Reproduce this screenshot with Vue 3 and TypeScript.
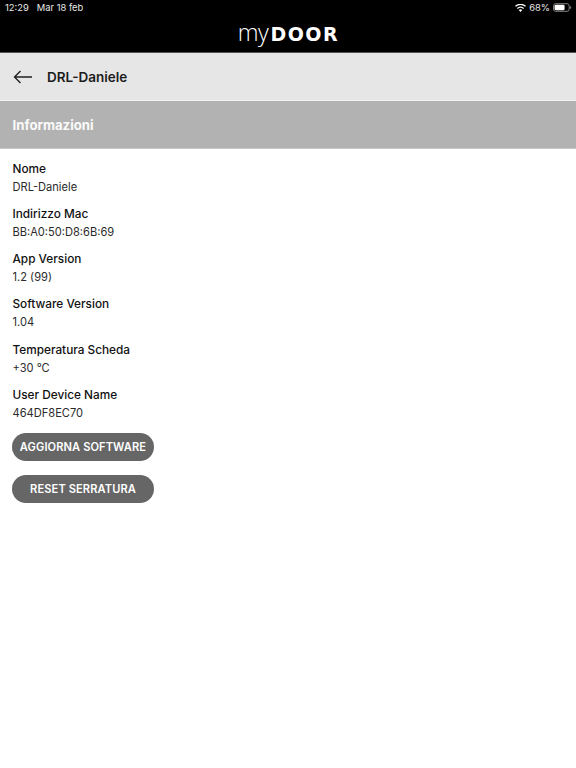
<script setup lang="ts">
const fields: { label: string; value: string }[] = [
  { label: 'Nome', value: 'DRL-Daniele' },
  { label: 'Indirizzo Mac', value: 'BB:A0:50:D8:6B:69' },
  { label: 'App Version', value: '1.2 (99)' },
  { label: 'Software Version', value: '1.04' },
  { label: 'Temperatura Scheda', value: '+30 °C' },
  { label: 'User Device Name', value: '464DF8EC70' },
]
const actions: string[] = ['AGGIORNA SOFTWARE', 'RESET SERRATURA']
</script>

<template>
  <div class="page">
    <header class="top">
      <div class="status">
        <div class="status-left"><span>12:29</span><span>Mar 18 feb</span></div>
        <div class="status-right">
          <svg width="11" height="8" viewBox="0 0 11 8" aria-hidden="true">
            <path d="M5.5 8 3.7 5.9a2.8 2.8 0 0 1 3.6 0Z" fill="#fff" />
            <path d="M2.8 4.9a4.2 4.2 0 0 1 5.4 0l.9-1a5.6 5.6 0 0 0-7.2 0Z" fill="#fff" />
            <path d="M.9 2.8a7 7 0 0 1 9.2 0l.9-1a8.4 8.4 0 0 0-11 0Z" fill="#fff" />
          </svg>
          <span>68%</span>
          <svg class="battery" width="19" height="9" viewBox="0 0 20 9" aria-hidden="true">
            <rect x=".5" y=".5" width="16.5" height="8" rx="2.2" fill="none" stroke="#8a8a8a" />
            <rect x="1.6" y="1.6" width="10.6" height="5.8" rx="1.2" fill="#fff" />
            <path d="M18 3v3c.7-.2 1.2-.8 1.2-1.500S18.700 3.200 18 3Z" fill="#8a8a8a" />
          </svg>
        </div>
      </div>
      <div class="brand">
        <span class="brand-my">my</span><span class="brand-door">DOOR</span>
      </div>
    </header>

    <div class="nav">
      <svg class="back" width="20" height="14" viewBox="0 0 20 14" aria-hidden="true">
        <path d="M19 7H1.500M7.500 1 1.500 7l6 6" fill="none" stroke="#222" stroke-width="1.400" />
      </svg>
      <span class="nav-title">DRL-Daniele</span>
    </div>

    <div class="section">Informazioni</div>

    <main class="content">
      <dl class="fields">
        <div v-for="f in fields" :key="f.label" class="field">
          <dt>{{ f.label }}</dt>
          <dd>{{ f.value }}</dd>
        </div>
      </dl>
      <div class="actions">
        <button v-for="a in actions" :key="a" type="button" class="btn">{{ a }}</button>
      </div>
    </main>
  </div>
</template>

<style>
html, body { background: #fff; }
</style>

<style scoped>
.page {
  width: 576px;
  height: 768px;
  overflow: hidden;
  background: #fff;
  font-family: Inter, "Liberation Sans", sans-serif;
  color: #1c1c1c;
}
.top {
  height: 52px;
  background: #000;
  border-bottom: 1px solid #555;
  box-sizing: content-box;
  color: #fff;
  display: flex;
  flex-direction: column;
}
.status {
  height: 15px;
  padding: 0 4px 0 5px;
  display: flex;
  justify-content: space-between;
  align-items: center;
  font-size: 9.400px;
  color: #e8e8e8;
}
.status-left { display: flex; gap: 8px; }
.status-right { display: flex; align-items: center; gap: 3px; }
.brand {
  flex: 1;
  display: flex;
  justify-content: center;
  align-items: baseline;
  padding-top: 2px;
  line-height: 30px;
  padding-left: 1px;
}
.brand-my {
  font-family: "Open Sans", sans-serif;
  font-weight: 300;
  font-size: 23.500px;
  letter-spacing: -0.500px;
  margin-right: 2px;
}
.brand-door {
  font-family: "DejaVu Sans", sans-serif;
  font-weight: 700;
  font-size: 19px;
  letter-spacing: 1.500px;
}
.nav {
  height: 47px;
  background: #e6e6e6;
  border-bottom: 1px solid #f0f0f0;
  display: flex;
  align-items: center;
  padding-left: 13px;
  gap: 14px;
}
.nav-title {
  font-size: 13.500px;
  font-weight: 600;
}
.section {
  height: 47px;
  background: #b2b2b2;
  border-bottom: 1px solid #c8c8c8;
  display: flex;
  align-items: center;
  padding-left: 12.500px;
  color: #fafafa;
  font-size: 13.200px;
  font-weight: 700;
}
.content { padding: 10.500px 12.500px 0; }
.fields { margin: 0; }
.field { height: 45.300px; }
dt {
  height: 18px;
  line-height: 18px;
  font-size: 11.800px;
  font-weight: 500;
  color: #111;
}
dd {
  margin: 0;
  line-height: 18px;
  font-size: 11.100px;
  color: #2a2a2a;
}
.actions {
  margin: 1.500px 0 0 -0.500px;
  display: flex;
  flex-direction: column;
  gap: 14px;
  align-items: flex-start;
}
.btn {
  width: 142px;
  height: 28px;
  border: 0;
  padding: 0;
  border-radius: 14px;
  background: #666;
  color: #fff;
  font-family: inherit;
  font-size: 11.100px;
  font-weight: 600;
  letter-spacing: 0.100px;
}
</style>
